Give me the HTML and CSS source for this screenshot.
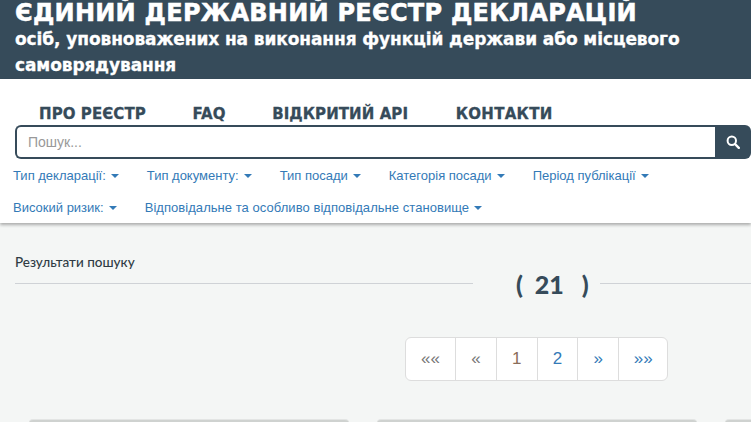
FILE: index.html
```html
<!DOCTYPE html>
<html lang="uk">
<head>
<meta charset="utf-8">
<title>Єдиний державний реєстр декларацій</title>
<link rel="stylesheet" href="styles.css">
</head>
<body>
<header class="banner">
  <h1 class="banner-title">ЄДИНИЙ ДЕРЖАВНИЙ РЕЄСТР ДЕКЛАРАЦІЙ</h1>
  <h2 class="banner-sub">осіб, уповноважених на виконання функцій держави або місцевого самоврядування</h2>
</header>
<section class="panel">
  <nav class="main-nav">
    <a href="#">ПРО РЕЄСТР</a>
    <a href="#">FAQ</a>
    <a href="#">ВІДКРИТИЙ API</a>
    <a href="#" class="nav-contacts">КОНТАКТИ</a>
  </nav>
  <form class="search">
    <input class="search-input" type="text" placeholder="Пошук...">
    <button class="search-btn" type="button" aria-label="Пошук">
      <svg width="14" height="14" viewBox="0 0 14 14"><circle cx="5.8" cy="5.8" r="4.2" fill="none" stroke="#fff" stroke-width="2"/><path d="M9 9l3.8 3.8" stroke="#fff" stroke-width="2.4" stroke-linecap="round"/></svg>
    </button>
  </form>
  <div class="filters">
    <a href="#">Тип декларації:<i class="caret"></i></a>
    <a href="#">Тип документу:<i class="caret"></i></a>
    <a href="#">Тип посади<i class="caret"></i></a>
    <a href="#">Категорія посади<i class="caret"></i></a>
    <a href="#">Період публікації<i class="caret"></i></a>
  </div>
  <div class="filters">
    <a href="#">Високий ризик:<i class="caret"></i></a>
    <a href="#" class="filter-long">Відповідальне та особливо відповідальне становище<i class="caret"></i></a>
  </div>
</section>
<main class="content">
  <div class="results-head">
    <div class="results-left">
      <div class="results-label">Результати пошуку</div>
      <div class="rule"></div>
    </div>
    <div class="count">(  21   )</div>
    <div class="rule rule-right"></div>
  </div>
  <ul class="pagination">
    <li>««</li><li>«</li><li class="current">1</li><li class="link">2</li><li class="link">»</li><li class="link">»»</li>
  </ul>
  <div class="cards">
    <div class="card"></div>
    <div class="card"></div>
    <div class="card"></div>
  </div>
</main>
</body>
</html>
```
FILE: styles.css
```css
html, body { margin: 0; padding: 0; height: 422px; overflow: hidden; }
body { background: #f4f6f5; font-family: "Liberation Sans", Arial, sans-serif; color: #333; }
.banner { background: #364b5a; height: 79px; padding: 0 15px; box-sizing: border-box; overflow: hidden; color: #fff; font-family: "DejaVu Sans", sans-serif; }
.banner-title { margin: 0; padding-top: 1px; font-size: 24px; line-height: 25px; font-weight: 700; white-space: nowrap; letter-spacing: .27px; -webkit-text-stroke: .5px #fff; }
.banner-sub { margin: 0; font-size: 17px; line-height: 26px; font-weight: 700; letter-spacing: -.09px; -webkit-text-stroke: .3px #fff; }
.panel { background: #fff; height: 144px; box-shadow: 0 2px 3px rgba(0,0,0,.3); position: relative; }
.main-nav { display: flex; gap: 46.6px; padding: 25px 0 0 39px; height: 21px; font-family: "DejaVu Sans", sans-serif; font-size: 15px; line-height: 20px; font-weight: 700; letter-spacing: .08px; -webkit-text-stroke: .3px #364b5a; }
.main-nav a { color: #364b5a; text-decoration: none; white-space: nowrap; }
.main-nav .nav-contacts { margin-left: 1px; letter-spacing: .3px; }
.search { display: flex; margin-left: 15px; height: 34px; }
.search-input { flex: 1; min-width: 0; box-sizing: border-box; height: 34px; border: 2px solid #364b5a; border-right: 0; border-radius: 6px 0 0 6px; padding: 0 11px; font: 14px "Liberation Sans", Arial, sans-serif; outline: 0; background: #fff; }
.search-input::placeholder { color: #999; opacity: 1; }
.search-btn { width: 36px; height: 34px; padding: 0; border: 0; background: #364b5a; border-radius: 0 6px 6px 0; display: flex; align-items: center; justify-content: center; }
.filters { display: flex; gap: 28px; padding-left: 13px; height: 32px; align-items: center; font-size: 13px; }
.filters a { color: #337ab7; text-decoration: none; white-space: nowrap; }
.filters .filter-long { letter-spacing: .05px; }
.caret { display: inline-block; margin-left: 5px; vertical-align: middle; border-top: 4px solid #337ab7; border-left: 4px solid transparent; border-right: 4px solid transparent; }
.results-head { display: flex; align-items: flex-end; padding-top: 19px; height: 42px; }
.results-left { width: 458px; margin-left: 15px; }
.results-label { font-family: "Lato", sans-serif; font-size: 13.5px; line-height: 20px; font-weight: 500; color: #2f3b44; height: 31px; }
.rule { height: 1px; background: #cfd2d6; }
.count { box-sizing: border-box; width: 127px; padding-left: 43px; text-align: left; font-family: "Lato", sans-serif; font-weight: 900; font-size: 25px; line-height: 26px; color: #364b5a; margin-bottom: -13px; white-space: pre; }
.rule-right { flex: 1; }
.pagination { list-style: none; display: flex; width: max-content; margin: 53px 0 0 405px; padding: 0; border: 1px solid #ddd; border-radius: 6px; background: #fff; font-size: 17px; color: #777; }
.pagination li { box-sizing: border-box; width: 40.8px; height: 42px; line-height: 42px; text-align: center; border-left: 1px solid #ddd; }
.pagination li:first-child { border-left: 0; width: 49px; }
.pagination li:last-child { width: 49px; }
.pagination .link { color: #337ab7; }
.pagination .current { color: #8a6d5a; }
.cards { display: flex; gap: 28px; margin: 38px 0 0 29px; overflow: hidden; }
.card { flex: none; width: 320px; height: 20px; box-sizing: border-box; border-top: 1px solid #e3e5e4; background: #cfd2d0; border-radius: 4px 4px 0 0; }
```
